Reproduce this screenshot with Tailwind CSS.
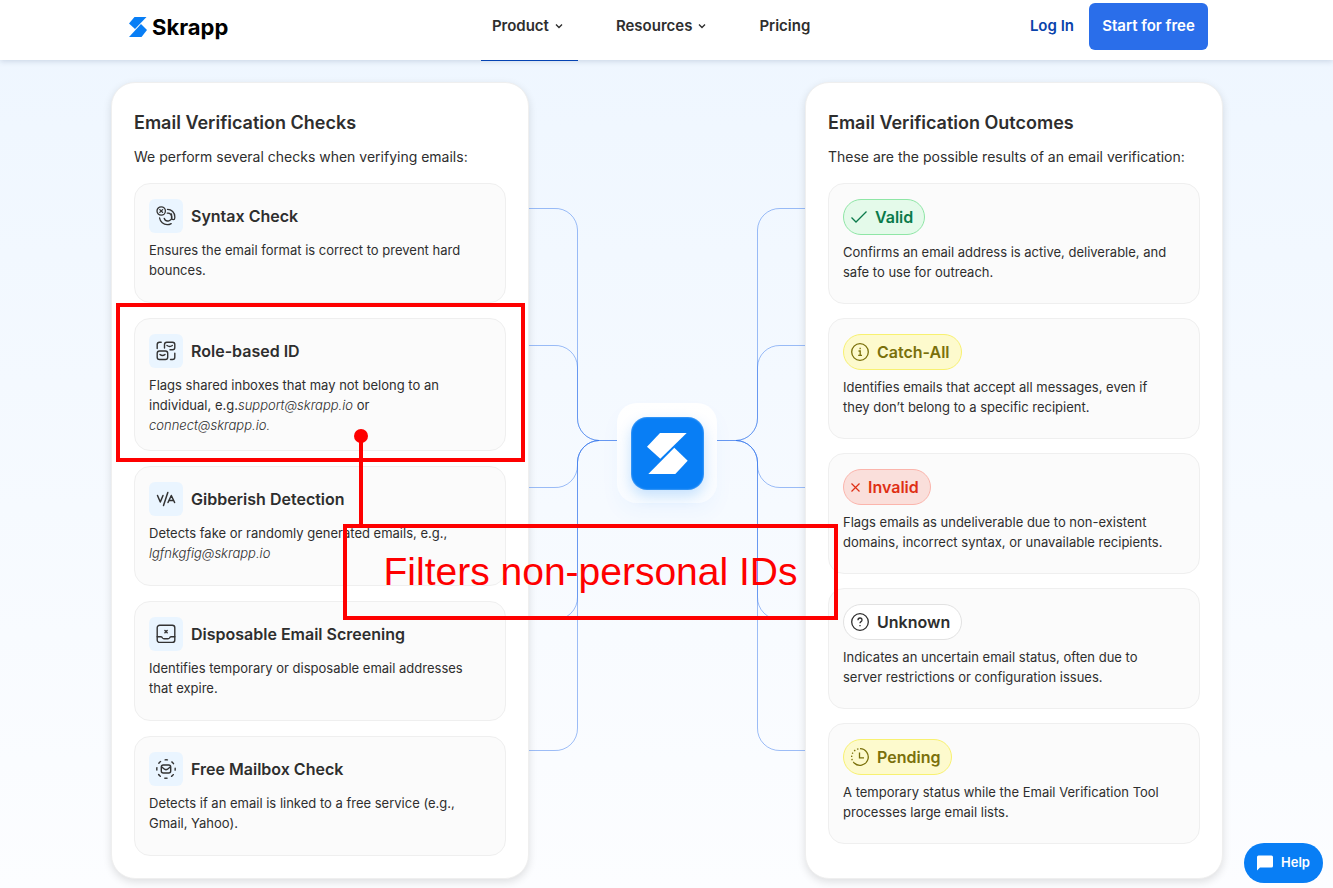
<!DOCTYPE html>
<html lang="en">
<head>
    <meta charset="UTF-8">
    <meta name="viewport" content="width=device-width, initial-scale=1">
    <title>Email Verification - Skrapp</title>
    <script src="https://cdn.jsdelivr.net/npm/@tailwindcss/browser@4"></script>
</head>
<body class="min-h-screen bg-linear-to-b from-[#eef6ff] to-[#fcfdff] font-['Inter','Liberation_Sans',sans-serif] text-[#2e2e2e]">

<!-- Header -->
<header class="relative z-10 h-[60px] bg-white pl-[3px] shadow-[0_1px_6px_rgba(40,70,110,0.2)]">
    <div class="mx-auto flex h-full max-w-[1080px] items-start justify-between">
        <a href="#" class="mt-3 flex items-center gap-1 text-[22px] leading-[30px] font-bold text-black">
            <svg class="h-5 w-5" viewBox="0 0 20 20" fill="#087ef5">
                <path d="M6.5 0H18.5L7 12L1 6.5Z"/>
                <path d="M13 7L19 13L13.5 20H1Z"/>
            </svg>
            Skrapp
        </a>

        <nav class="ml-11 flex h-[61px] gap-[27px] text-[15px] font-semibold">
            <a href="#" class="flex items-center gap-[6px] border-b border-[#0443b3] pr-[15px] pb-2 pl-[11px]">
                Product
                <svg class="h-2 w-2" viewBox="0 0 8 8" fill="none" stroke="#2e2e2e" stroke-width="1.4"><path d="M1 2.5L4 5.5L7 2.5"/></svg>
            </a>
            <a href="#" class="flex items-center gap-[6px] border-b border-transparent pr-[15px] pb-2 pl-[11px]">
                Resources
                <svg class="h-2 w-2" viewBox="0 0 8 8" fill="none" stroke="#2e2e2e" stroke-width="1.4"><path d="M1 2.5L4 5.5L7 2.5"/></svg>
            </a>
            <a href="#" class="flex items-center border-b border-transparent px-[11px] pb-2">Pricing</a>
        </nav>

        <div class="mt-[3px] flex items-center gap-[15px] text-[15px] font-semibold">
            <a href="#" class="text-[#0a43ab]">Log In</a>
            <button type="button" class="h-[47px] w-[119px] rounded-md bg-[#2a6eea] text-white">Start for free</button>
        </div>
    </div>
</header>

<main class="pt-[22px] pb-[9px] pl-px">
    <div class="relative mx-auto flex max-w-[1112px]">

        <!-- Checks -->
        <section class="w-[418px] shrink-0 rounded-3xl border border-[#efefef] bg-white px-[22px] pt-[26px] pb-[22px] shadow-[0_3px_8px_rgba(0,0,0,0.12)]">
            <h2 class="text-lg leading-7 font-semibold">Email Verification Checks</h2>
            <p class="mt-2 mb-[14px] text-sm leading-6">We perform several checks when verifying emails:</p>

            <div class="flex flex-col gap-[15px]">
                <div class="min-h-[120px] rounded-2xl border border-[#efefef] bg-[#fbfbfb] px-[14px] py-[15px]">
                    <div class="flex items-center gap-2">
                        <span class="flex h-[34px] w-[34px] items-center justify-center rounded-md bg-[#eaf5ff]">
                            <svg class="h-5 w-5" viewBox="0 0 20 20" fill="none" stroke="#333" stroke-width="1.3" stroke-linecap="round">
                                <circle cx="5.2" cy="5" r="4.2"/>
                                <path d="M3.8 3.6L6.6 6.4M6.6 3.6L3.8 6.4"/>
                                <path d="M11.5 3.4C15.6 3.4 18.8 6.6 18.8 10.8V11.8C18.8 14.3 15.8 14.3 15.5 12V8"/>
                                <path d="M11.3 7.2A3.9 3.9 0 1 1 8.2 12.3"/>
                                <path d="M3.6 12C4.2 16 7.5 18.7 11.2 18.7C12.8 18.7 14 18.3 15.2 17.6"/>
                            </svg>
                        </span>
                        <h3 class="text-base font-semibold">Syntax Check</h3>
                    </div>
                    <p class="mt-[7px] pr-3 text-[13px] leading-5">Ensures the email format is correct to prevent hard bounces.</p>
                </div>

                <div class="min-h-[120px] rounded-2xl border border-[#efefef] bg-[#fbfbfb] px-[14px] py-[15px]">
                    <div class="flex items-center gap-2">
                        <span class="flex h-[34px] w-[34px] items-center justify-center rounded-md bg-[#eaf5ff]">
                            <svg class="h-5 w-5" viewBox="0 0 20 20" fill="none" stroke="#333" stroke-width="1.4" stroke-linecap="round">
                                <path d="M8.5 7V3.5Q8.5 1.2 10.8 1.2H16.5Q18.8 1.2 18.8 3.5V6.5Q18.8 8.8 16.5 8.8H14"/>
                                <path d="M11 4.5Q13.7 6.5 16.3 4.5"/>
                                <rect x="1.2" y="10" width="10.5" height="8.5" rx="2.3"/>
                                <path d="M4 13.5Q6.5 15.5 9 13.5"/>
                                <path d="M1.2 7.5V3.5Q1.2 1.3 3.5 1.3H5.2M14.5 18.5H16.5Q18.8 18.5 18.8 16.3V12.2"/>
                            </svg>
                        </span>
                        <h3 class="text-base font-semibold">Role-based ID</h3>
                    </div>
                    <p class="mt-[7px] pr-3 text-[13px] leading-5">Flags shared inboxes that may not belong to an individual, e.g.<em class="font-light">support@skrapp.io</em> or <em class="font-light">connect@skrapp.io.</em></p>
                </div>

                <div class="min-h-[120px] rounded-2xl border border-[#efefef] bg-[#fbfbfb] px-[14px] py-[15px]">
                    <div class="flex items-center gap-2">
                        <span class="flex h-[34px] w-[34px] items-center justify-center rounded-md bg-[#eaf5ff]">
                            <svg class="h-5 w-5" viewBox="0 0 20 20" fill="none" stroke="#333" stroke-width="1.5" stroke-linecap="round" stroke-linejoin="round">
                                <path d="M1.5 6.5L4.3 13L7 6.5M11.8 3.5L7.5 16.5M12 13.5L15.3 6.5L18.6 13.5M13 11.6H17.6"/>
                            </svg>
                        </span>
                        <h3 class="text-base font-semibold">Gibberish Detection</h3>
                    </div>
                    <p class="mt-[7px] pr-3 text-[13px] leading-5">Detects fake or randomly generated emails, e.g., <em class="font-light">lgfnkgfig@skrapp.io</em></p>
                </div>

                <div class="min-h-[120px] rounded-2xl border border-[#efefef] bg-[#fbfbfb] px-[14px] py-[15px]">
                    <div class="flex items-center gap-2">
                        <span class="flex h-[34px] w-[34px] items-center justify-center rounded-md bg-[#eaf5ff]">
                            <svg class="h-5 w-5" viewBox="0 0 20 20" fill="none" stroke="#333" stroke-width="1.4" stroke-linecap="round">
                                <rect x="1.2" y="1.2" width="17.6" height="17.2" rx="2.5"/>
                                <path d="M1.2 12.8H5Q6 12.8 6.5 14Q7 14.8 8 14.8H12Q13 14.8 13.5 14Q14 12.8 15 12.8H18.8"/>
                                <path d="M8.9 6.5L11.2 8.8M11.2 6.5L8.9 8.8"/>
                            </svg>
                        </span>
                        <h3 class="text-base font-semibold">Disposable Email Screening</h3>
                    </div>
                    <p class="mt-[7px] pr-3 text-[13px] leading-5">Identifies temporary or disposable email addresses that expire.</p>
                </div>

                <div class="min-h-[120px] rounded-2xl border border-[#efefef] bg-[#fbfbfb] px-[14px] py-[15px]">
                    <div class="flex items-center gap-2">
                        <span class="flex h-[34px] w-[34px] items-center justify-center rounded-md bg-[#eaf5ff]">
                            <svg class="h-5 w-5" viewBox="0 0 20 20" fill="none" stroke="#333" stroke-width="1.4" stroke-linecap="round">
                                <circle cx="10" cy="10" r="9.2" stroke-dasharray="2.4 4.825" stroke-dashoffset="1.2"/>
                                <rect x="5.3" y="6" width="9.4" height="8" rx="2"/>
                                <path d="M5.8 8L8.5 10.2Q10 11.2 11.5 10.2L14.2 8"/>
                            </svg>
                        </span>
                        <h3 class="text-base font-semibold">Free Mailbox Check</h3>
                    </div>
                    <p class="mt-[7px] pr-3 text-[13px] leading-5">Detects if an email is linked to a free service (e.g., Gmail, Yahoo).</p>
                </div>
            </div>
        </section>

        <!-- Connectors -->
        <div class="relative flex-1">
            <svg class="absolute inset-x-0 top-0 h-[796px] w-full" viewBox="0 0 276 796" fill="none" stroke="#2a6eea" stroke-opacity="0.45">
                <path d="M0 126.500H25A22 22 0 0 1 48.500 148V336A22 22 0 0 0 70 358.500H88"/>
                <path d="M0 263.500H25A22 22 0 0 1 48.500 285V336A22 22 0 0 0 70 358.500H88"/>
                <path d="M0 405.500H25A22 22 0 0 0 48.500 383V380A22 22 0 0 1 70 358.500"/>
                <path d="M0 537.500H25A22 22 0 0 0 48.500 515V380A22 22 0 0 1 70 358.500"/>
                <path d="M0 668.500H25A22 22 0 0 0 48.500 646V380A22 22 0 0 1 70 358.500"/>
                <path d="M276 126.500H251A22 22 0 0 0 228.500 148V336A22 22 0 0 1 207 358.500H187"/>
                <path d="M276 263.500H251A22 22 0 0 0 228.500 285V336A22 22 0 0 1 207 358.500H187"/>
                <path d="M276 405.500H251A22 22 0 0 1 228.500 383V380A22 22 0 0 0 207 358.500"/>
                <path d="M276 537.500H251A22 22 0 0 1 228.500 515V380A22 22 0 0 0 207 358.500"/>
                <path d="M276 668.500H251A22 22 0 0 1 228.500 646V380A22 22 0 0 0 207 358.500"/>
            </svg>
            <div class="relative mx-auto mt-[321px] flex h-[100px] w-[100px] items-center justify-center rounded-[20px] bg-linear-to-b from-white to-[#f9fcff] shadow-[0_10px_20px_rgba(8,126,245,0.04)]">
                <div class="h-[73px] w-[73px] rounded-2xl bg-[#087ef5] shadow-[0_6px_14px_rgba(8,126,245,0.22),inset_0_0_2px_rgba(255,255,255,0.6)]">
                    <svg class="h-full w-full" viewBox="0 0 73 73" fill="#fff">
                        <path d="M29 16H55.7L29.3 41.7L16 29.7Z"/>
                        <path d="M43.3 30.7L56.7 43.7L44.3 57H17.3Z"/>
                    </svg>
                </div>
            </div>
        </div>

        <!-- Outcomes -->
        <section class="w-[418px] shrink-0 rounded-3xl border border-[#efefef] bg-white px-[22px] pt-[26px] pb-[22px] shadow-[0_3px_8px_rgba(0,0,0,0.12)]">
            <h2 class="text-lg leading-7 font-semibold">Email Verification Outcomes</h2>
            <p class="mt-2 mb-[14px] text-sm leading-6">These are the possible results of an email verification:</p>

            <div class="flex flex-col gap-[14px]">
                <div class="min-h-[121px] rounded-2xl border border-[#efefef] bg-[#fbfbfb] px-[14px] py-[15px]">
                    <h3 class="flex h-9 w-fit items-center gap-2 rounded-full border border-[#8fe6a6] bg-[#e4faea] pr-[11px] pl-[7px] text-base font-semibold text-[#0b7a4b]">
                        <svg class="h-4 w-4" viewBox="0 0 16 16" fill="none" stroke="currentColor" stroke-width="1.3"><path d="M0.5 8.5L5 13L15.5 2.5"/></svg>
                        Valid
                    </h3>
                    <p class="mt-[7px] pr-3 text-[13px] leading-5">Confirms an email address is active, deliverable, and safe to use for outreach.</p>
                </div>

                <div class="min-h-[121px] rounded-2xl border border-[#efefef] bg-[#fbfbfb] px-[14px] py-[15px]">
                    <h3 class="flex h-9 w-fit items-center gap-2 rounded-full border border-[#f8f171] bg-[#fdfacd] pr-[11px] pl-[7px] text-base font-semibold text-[#7a700b]">
                        <svg class="h-[18px] w-[18px]" viewBox="0 0 18 18" fill="none" stroke="currentColor" stroke-width="1.3"><circle cx="9" cy="9" r="8.3"/><path d="M7.5 8H9.2V12M7.2 12.3H11M8.5 5.5H9.8"/></svg>
                        Catch-All
                    </h3>
                    <p class="mt-[7px] pr-3 text-[13px] leading-5">Identifies emails that accept all messages, even if they don’t belong to a specific recipient.</p>
                </div>

                <div class="min-h-[121px] rounded-2xl border border-[#efefef] bg-[#fbfbfb] px-[14px] py-[15px]">
                    <h3 class="flex h-9 w-fit items-center gap-2 rounded-full border border-[#fbb5ac] bg-[#fadfdb] pr-[11px] pl-[7px] text-base font-semibold text-[#df2f14]">
                        <svg class="h-[9px] w-[9px]" viewBox="0 0 9 9" fill="none" stroke="currentColor" stroke-width="1.2"><path d="M0.5 0.5L8.5 8.5M8.5 0.5L0.5 8.5"/></svg>
                        Invalid
                    </h3>
                    <p class="mt-[7px] pr-3 text-[13px] leading-5">Flags emails as undeliverable due to non-existent domains, incorrect syntax, or unavailable recipients.</p>
                </div>

                <div class="min-h-[121px] rounded-2xl border border-[#efefef] bg-[#fbfbfb] px-[14px] py-[15px]">
                    <h3 class="flex h-9 w-fit items-center gap-2 rounded-full border border-[#e2e2e2] bg-white pr-[11px] pl-[7px] text-base font-semibold">
                        <svg class="h-[18px] w-[18px]" viewBox="0 0 18 18" fill="none" stroke="currentColor" stroke-width="1.3"><circle cx="9" cy="9" r="8.3"/><path d="M7 7.2Q7 5 9 5Q11 5 11 6.9Q11 8 10 8.6Q9 9.2 9 10.2M9 12V13.3"/></svg>
                        Unknown
                    </h3>
                    <p class="mt-[7px] pr-3 text-[13px] leading-5">Indicates an uncertain email status, often due to server restrictions or configuration issues.</p>
                </div>

                <div class="min-h-[121px] rounded-2xl border border-[#efefef] bg-[#fbfbfb] px-[14px] py-[15px]">
                    <h3 class="flex h-9 w-fit items-center gap-2 rounded-full border border-[#f8f171] bg-[#fdfacd] pr-[11px] pl-[7px] text-base font-semibold text-[#7a700b]">
                        <svg class="h-[18px] w-[18px]" viewBox="0 0 18 18" fill="none" stroke="currentColor" stroke-width="1.3"><path d="M9 0.7A8.3 8.3 0 1 1 3.2 15"/><path d="M3.2 15A8.3 8.3 0 0 1 9 0.7" stroke-dasharray="1.4 1.9"/><path d="M8.5 4.5V9.8H13"/></svg>
                        Pending
                    </h3>
                    <p class="mt-[7px] pr-3 text-[13px] leading-5">A temporary status while the Email Verification Tool processes large email lists.</p>
                </div>
            </div>
        </section>

        <!-- Callout -->
        <div class="absolute top-[221px] left-[5px] h-[159px] w-[409px] border-4 border-[#fe0000]"></div>
        <div class="absolute top-[347px] left-[243px] h-[14px] w-[14px] rounded-full bg-[#fe0000]"></div>
        <div class="absolute top-[354px] left-[248px] h-[90px] w-1 bg-[#fe0000]"></div>
        <p class="absolute top-[442px] left-[232px] flex h-24 w-[495px] items-center justify-center border-4 border-[#fe0000] font-['Liberation_Sans',Arial,sans-serif] text-[39px] whitespace-nowrap text-[#fe0000]">Filters non-personal IDs</p>
    </div>
</main>

<button type="button" class="fixed right-[10px] bottom-[5px] z-20 flex h-10 w-[79px] items-center justify-center gap-2 rounded-full bg-[#087ef5] text-[13px] font-semibold text-white">
    <svg class="h-4 w-4" viewBox="0 0 16 16" fill="#fff"><path d="M1.5 0.5H14.5Q16 0.5 16 2V11Q16 12.5 14.5 12.5H3L0 15.5V2Q0 0.5 1.5 0.5Z"/></svg>
    Help
</button>

</body>
</html>
